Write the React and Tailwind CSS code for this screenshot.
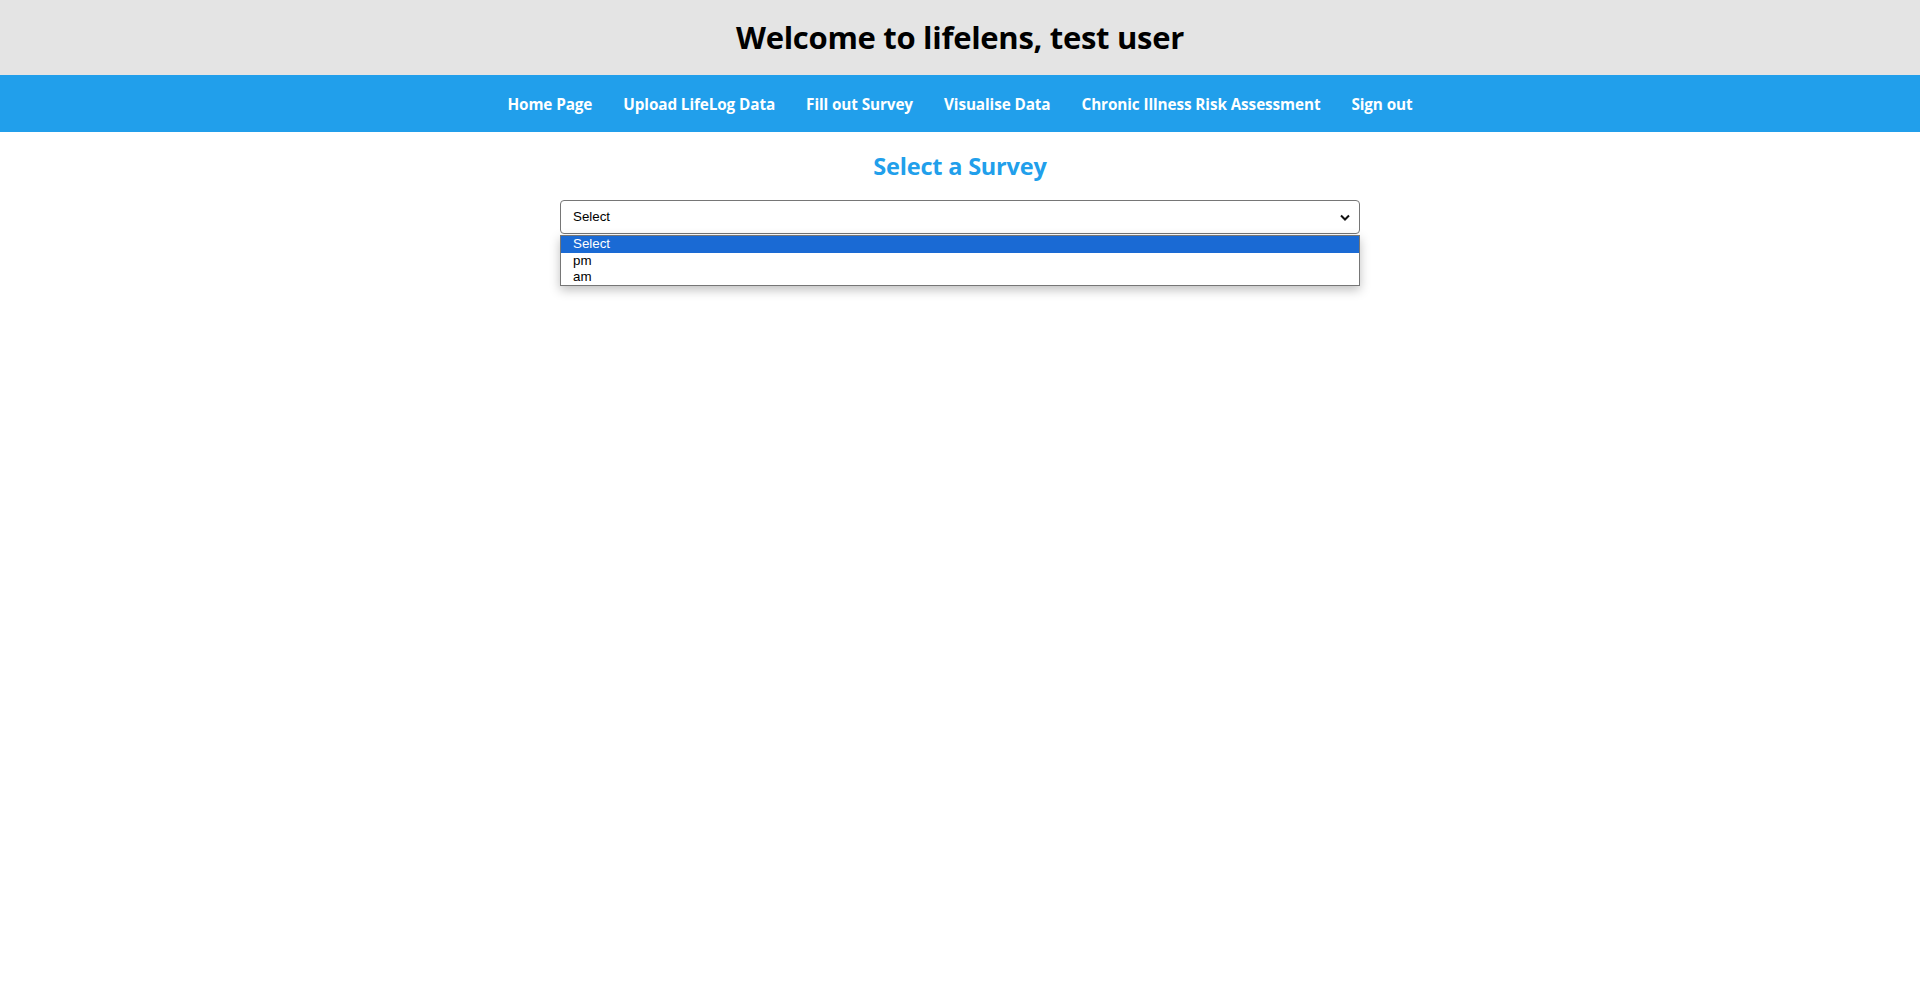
import React, { useState } from "react";

const links = [
  "Home Page",
  "Upload LifeLog Data",
  "Fill out Survey",
  "Visualise Data",
  "Chronic Illness Risk Assessment",
  "Sign out",
];

const options = ["Select", "pm", "am"];

const App = () => {
  const [choice, setChoice] = useState("Select");

  return (
    <div className="min-h-[992px] bg-white font-['Open_Sans',sans-serif]">
      <header className="h-[75px] bg-[#e4e4e4] flex items-center justify-center">
        <h1 className="text-[31px] font-bold tracking-[-0.3px] text-black">Welcome to lifelens, test user</h1>
      </header>

      <nav className="h-[57px] bg-[#219feb] flex items-center justify-center gap-[31px] pt-[2px]">
        {links.map((l) => (
          <a key={l} href="#" className="text-[15.3px] font-bold text-white tracking-[-0.1px]">
            {l}
          </a>
        ))}
      </nav>

      <main className="flex flex-col items-center">
        <h2 className="mt-[17px] text-[23.5px] font-bold text-[#219feb] tracking-[-0.2px]">Select a Survey</h2>

        <div className="relative mt-[16px] w-[800px] font-['Liberation_Sans',Arial,sans-serif] text-[13.33px] text-black">
          <div className="h-[34px] rounded-[4px] border border-[#767676] bg-white flex items-center justify-between pl-[12px] pr-[9px]">
            <span>{choice}</span>
            <svg width="10" height="7" viewBox="0 0 10 7" className="mt-[1px]">
              <path d="M1 1.5 L5 5.5 L9 1.5" fill="none" stroke="#111" strokeWidth="2" />
            </svg>
          </div>
          <div className="absolute left-0 right-0 top-[35px] border border-[#767676] bg-white shadow-[0_4px_10px_rgba(0,0,0,0.25)]">
            {options.map((o) => (
              <div
                key={o}
                onClick={() => setChoice(o)}
                className={`pl-[12px] leading-[16px] ${
                  o === "Select" ? "bg-[#1a6ad4] text-white h-[17px]" : "h-[16px] text-black"
                }`}
              >
                {o}
              </div>
            ))}
          </div>
        </div>
      </main>
    </div>
  );
};

export default App;
